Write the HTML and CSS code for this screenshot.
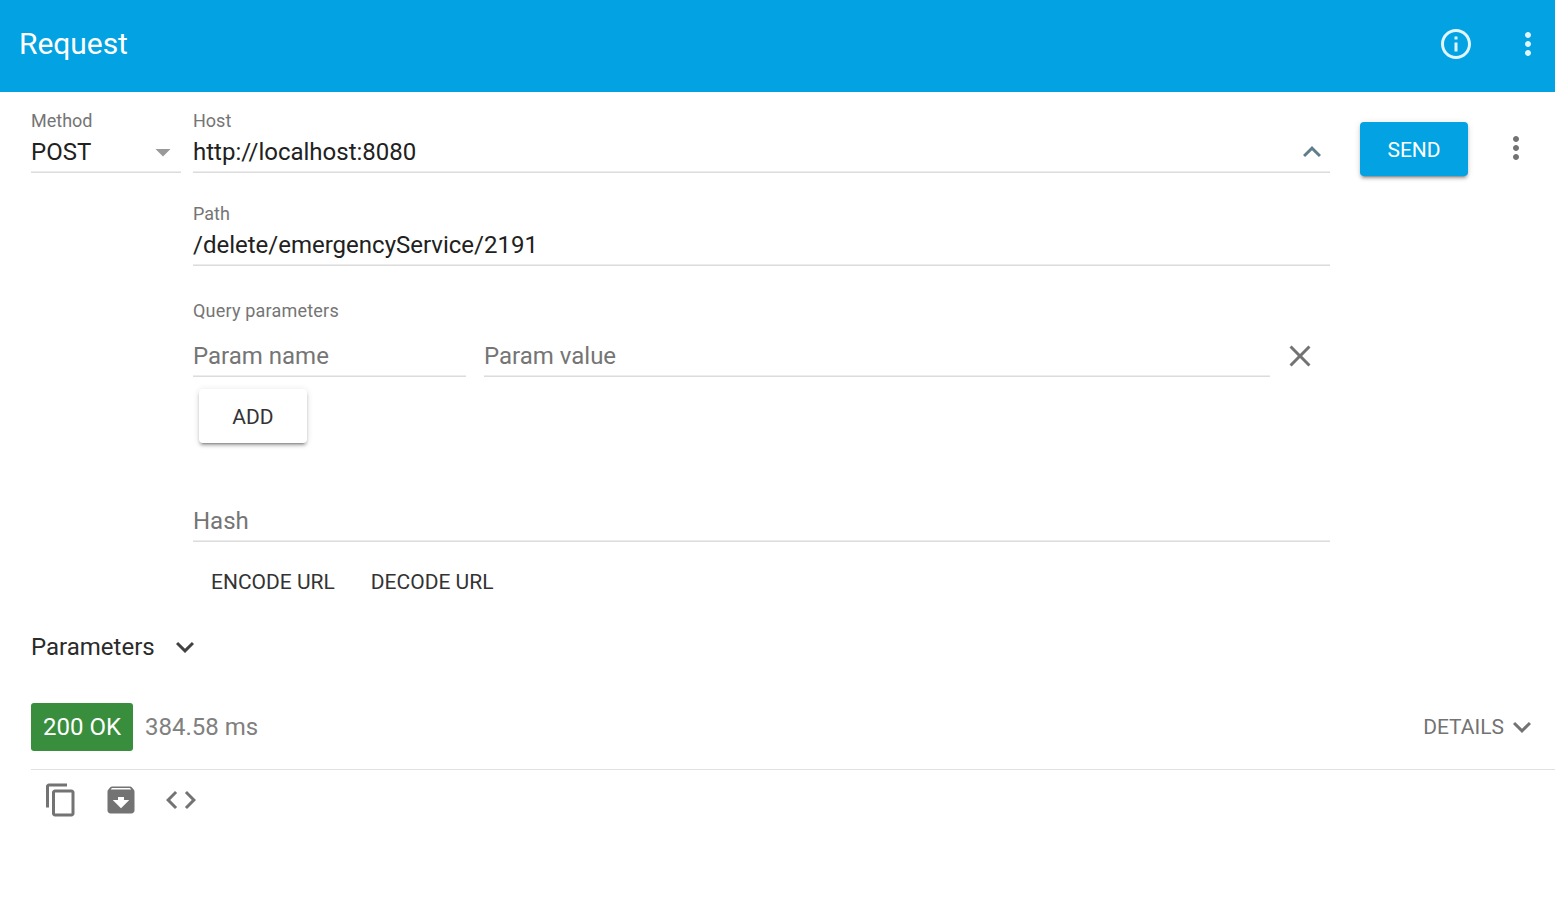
FILE: index.html
```
<!DOCTYPE html>
<html lang="en">
<head>
<meta charset="utf-8">
<title>Request</title>
<link rel="stylesheet" href="styles.css">
</head>
<body>
<header class="toolbar">
  <h1 class="title">Request</h1>
  <svg class="icon" viewBox="0 0 24 24"><path d="M11 17h2v-6h-2v6zm1-15C6.48 2 2 6.48 2 12s4.48 10 10 10 10-4.48 10-10S17.52 2 12 2zm0 18c-4.41 0-8-3.59-8-8s3.59-8 8-8 8 3.59 8 8-3.59 8-8 8zM11 9h2V7h-2v2z"/></svg>
  <svg class="icon" viewBox="0 0 24 24"><path d="M12 8c1.1 0 2-.9 2-2s-.9-2-2-2-2 .9-2 2 .9 2 2 2zm0 2c-1.1 0-2 .9-2 2s.9 2 2 2 2-.9 2-2-.9-2-2-2zm0 6c-1.1 0-2 .9-2 2s.9 2 2 2 2-.9 2-2-.9-2-2-2z"/></svg>
</header>
<main class="panel">
  <section class="request">
    <div class="field method">
      <span class="label">Method</span>
      <div class="value">POST
        <svg class="icon" viewBox="0 0 24 24"><path d="M7 10l5 5 5-5z"/></svg>
      </div>
    </div>
    <div class="url">
      <div class="field">
        <span class="label">Host</span>
        <div class="value host">http://localhost:8080
          <svg class="icon" viewBox="0 0 24 24"><path d="M12 8l-6 6 1.41 1.41L12 10.83l4.59 4.58L18 14z"/></svg>
        </div>
      </div>
      <div class="field path">
        <span class="label">Path</span>
        <div class="value">/delete/emergencyService/2191</div>
      </div>
      <span class="label query-label">Query parameters</span>
      <div class="params">
        <div class="value empty name">Param name</div>
        <div class="value empty">Param value</div>
        <svg class="icon" viewBox="0 0 24 24"><path d="M19 6.41L17.59 5 12 10.59 6.41 5 5 6.41 10.59 12 5 17.59 6.41 19 12 13.41 17.59 19 19 17.59 13.41 12z"/></svg>
      </div>
      <button class="button raised">ADD</button>
      <div class="value empty hash">Hash</div>
      <div class="codec">
        <button class="button flat">ENCODE URL</button>
        <button class="button flat">DECODE URL</button>
      </div>
    </div>
    <div class="actions">
      <button class="button raised primary">SEND</button>
      <svg class="icon" viewBox="0 0 24 24"><path d="M12 8c1.1 0 2-.9 2-2s-.9-2-2-2-2 .9-2 2 .9 2 2 2zm0 2c-1.1 0-2 .9-2 2s.9 2 2 2 2-.9 2-2-.9-2-2-2zm0 6c-1.1 0-2 .9-2 2s.9 2 2 2 2-.9 2-2-.9-2-2-2z"/></svg>
    </div>
  </section>
  <section class="parameters">
    <span>Parameters</span>
    <svg class="icon" viewBox="0 0 24 24"><path d="M16.59 8.59L12 13.17 7.41 8.59 6 10l6 6 6-6z"/></svg>
  </section>
  <section class="status">
    <span class="badge">200 OK</span>
    <span class="time">384.58 ms</span>
    <span class="details">DETAILS</span>
    <svg class="icon" viewBox="0 0 24 24"><path d="M16.59 8.59L12 13.17 7.41 8.59 6 10l6 6 6-6z"/></svg>
  </section>
  <section class="response-tools">
    <svg class="icon" viewBox="0 0 24 24"><path d="M16 1H4c-1.1 0-2 .9-2 2v14h2V3h12V1zm3 4H8c-1.1 0-2 .9-2 2v14c0 1.1.9 2 2 2h11c1.1 0 2-.9 2-2V7c0-1.1-.9-2-2-2zm0 16H8V7h11v14z"/></svg>
    <svg class="icon" viewBox="0 0 24 24"><path d="M20.54 5.23l-1.39-1.68C18.88 3.21 18.47 3 18 3H6c-.47 0-.88.21-1.16.55L3.46 5.23C3.17 5.57 3 6.02 3 6.5V19c0 1.1.9 2 2 2h14c1.1 0 2-.9 2-2V6.5c0-.48-.17-.93-.46-1.27zM12 17.5L6.5 12H10v-2h4v2h3.5L12 17.5zM5.12 5l.81-1h12l.94 1H5.12z"/></svg>
    <svg class="icon" viewBox="0 0 24 24"><path d="M9.4 16.6L4.8 12l4.6-4.6L8 6l-6 6 6 6 1.4-1.4zm5.2 0l4.6-4.6-4.6-4.6L16 6l6 6-6 6-1.4-1.4z"/></svg>
  </section>
</main>
</body>
</html>
```
FILE: styles.css
```
* { box-sizing: border-box; }
body {
  margin: 0;
  background: #fff;
  color: #212121;
  font: 24px/36px Roboto, sans-serif;
}
.icon { display: block; flex: none; width: 36px; height: 36px; fill: #737373; }

.toolbar {
  display: flex;
  align-items: center;
  gap: 36px;
  height: 92px;
  padding: 0 9px 4px 19px;
  background: #02a2e3;
  color: #fff;
}
.toolbar .icon { fill: #e1f5fe; }
.title { flex: 1; margin: 0; font-size: 30px; font-weight: 400; letter-spacing: -0.05px; }

.panel { padding: 13px 0 0 31px; }
.request { display: flex; height: 511px; }
.label { display: block; height: 30px; font-size: 18px; line-height: 31px; color: #757575; }
.value {
  display: flex;
  justify-content: space-between;
  height: 38px;
  line-height: 35px;
  background: linear-gradient(#ececec 50%, #dcdcdc 50%) bottom / 100% 2px no-repeat;
}
.value .icon, .params .icon { margin-top: -1px; }
.empty { color: #757575; }
.method { width: 150px; margin-right: 12px; }
.method .icon { fill: #999; }
.url { width: 1137px; }
.host .icon { fill: #607d8b; }
.path { margin-top: 25px; }
.query-label { margin-top: 29px; letter-spacing: 0.2px; }
.params { display: flex; gap: 18px; margin-top: 14px; }
.params .value { width: 786px; }
.params .name { width: 273px; }
.params .icon { margin-left: -6px; }

.button {
  display: block;
  height: 54px;
  padding: 0;
  border: 0;
  border-radius: 4px;
  background: #fff;
  color: #333;
  font: 21px/54px Roboto, sans-serif;
}
.raised {
  width: 108px;
  margin: 12px 0 0 6px;
  padding-top: 2px;
  box-shadow: 0 3px 3px rgba(0,0,0,.18), 0 1px 7px rgba(0,0,0,.12), 0 4px 2px -3px rgba(0,0,0,.3);
  line-height: 52px;
}
.hash { margin-top: 61px; }
.codec { display: flex; gap: 36px; margin: 13px 0 0 18px; }
.actions { display: flex; margin-left: 30px; }
.actions .icon { margin: 25px 0 0 30px; }
.primary { margin: 17px 0 0; background: #02a2e3; color: #fff; }

.parameters { display: flex; align-items: center; gap: 12px; height: 62px; color: #2b2b2b; }
.parameters .icon { fill: #424242; }
.status {
  display: flex;
  align-items: center;
  height: 92px;
  padding: 6px 15px 0 0;
  border-bottom: 1px solid #e0e0e0;
}
.badge {
  width: 102px;
  height: 48px;
  margin-right: 12px;
  border-radius: 3px;
  background: #388e3c;
  color: #fff;
  line-height: 48px;
  text-align: center;
}
.time { flex: 1; color: #808080; }
.details { color: #737373; font-size: 21px; }
.response-tools { display: flex; gap: 24px; padding: 12px; }
```
